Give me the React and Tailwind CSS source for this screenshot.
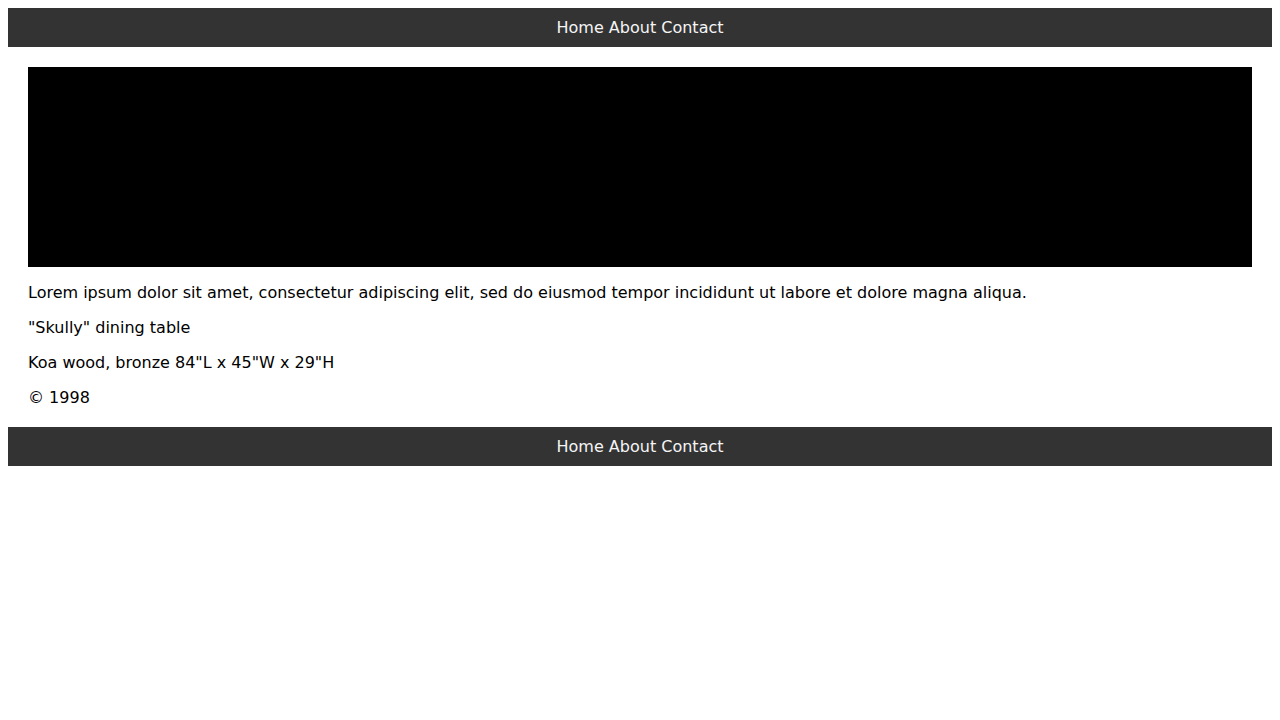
export default function App() {
  const links = ['Home', 'About', 'Contact']

  const Bar = () => (
    <nav className="bg-[#333333] py-[10px] text-center text-[#f5f5f5] leading-[19px]">
      {links.map((l, i) => (
        <span key={l}>{l}{i < links.length - 1 ? ' ' : ''}</span>
      ))}
    </nav>
  )

  return (
    <div className="m-2 bg-white text-black text-base font-['DejaVu_Sans',sans-serif]">
      <Bar />
      <main className="p-5 flex flex-col gap-4 leading-[19px]">
        <div className="h-[200px] bg-black" />
        <p>Lorem ipsum dolor sit amet, consectetur adipiscing elit, sed do eiusmod tempor incididunt ut labore et dolore magna aliqua.</p>
        <p>"Skully" dining table</p>
        <p>Koa wood, bronze 84"L x 45"W x 29"H</p>
        <p>© 1998</p>
      </main>
      <Bar />
    </div>
  )
}
